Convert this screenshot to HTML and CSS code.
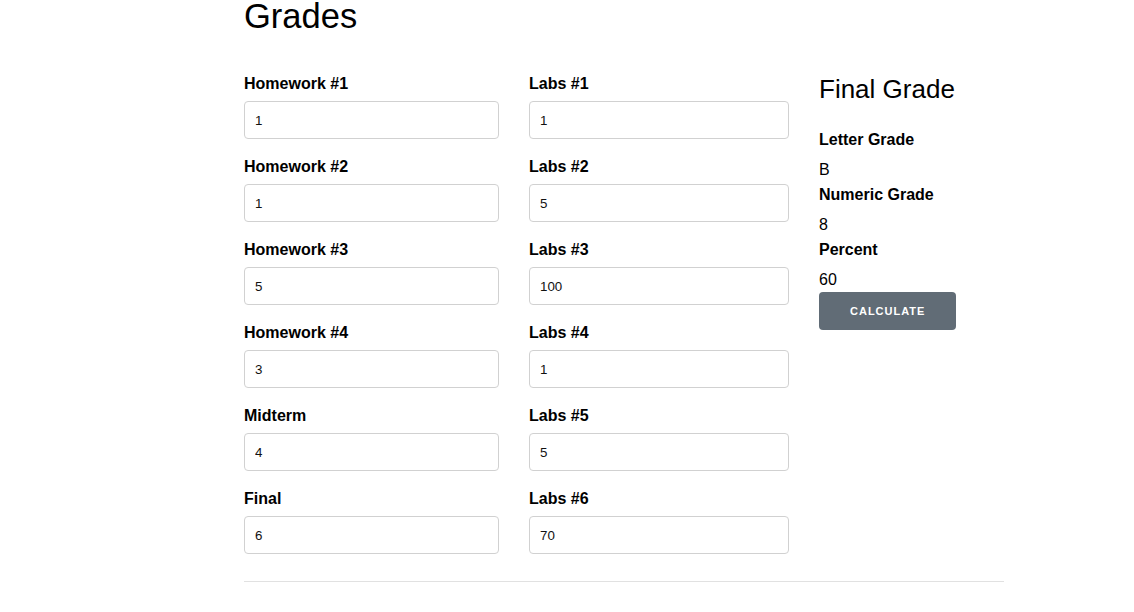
FILE: index.html
```html
<!DOCTYPE html>
<html>
<head>
<meta charset="utf-8">
<title>Grades</title>
<link rel="stylesheet" href="styles.css">
</head>
<body>
<div class="container">
  <h1 class="title">Grades</h1>
  <div class="grid">
    <div class="col">
      <div class="field"><label class="label">Homework #1</label><input class="input" type="text" value="1"></div>
      <div class="field"><label class="label">Homework #2</label><input class="input" type="text" value="1"></div>
      <div class="field"><label class="label">Homework #3</label><input class="input" type="text" value="5"></div>
      <div class="field"><label class="label">Homework #4</label><input class="input" type="text" value="3"></div>
      <div class="field"><label class="label">Midterm</label><input class="input" type="text" value="4"></div>
      <div class="field"><label class="label">Final</label><input class="input" type="text" value="6"></div>
    </div>
    <div class="col">
      <div class="field"><label class="label">Labs #1</label><input class="input" type="text" value="1"></div>
      <div class="field"><label class="label">Labs #2</label><input class="input" type="text" value="5"></div>
      <div class="field"><label class="label">Labs #3</label><input class="input" type="text" value="100"></div>
      <div class="field"><label class="label">Labs #4</label><input class="input" type="text" value="1"></div>
      <div class="field"><label class="label">Labs #5</label><input class="input" type="text" value="5"></div>
      <div class="field"><label class="label">Labs #6</label><input class="input" type="text" value="70"></div>
    </div>
    <div class="result">
      <h2 class="subtitle">Final Grade</h2>
      <div class="label result-label">Letter Grade</div>
      <div class="value">B</div>
      <div class="label result-label">Numeric Grade</div>
      <div class="value">8</div>
      <div class="label result-label">Percent</div>
      <div class="value value-last">60</div>
      <button class="button" type="button">Calculate</button>
    </div>
  </div>
  <hr class="rule">
</div>
</body>
</html>
```
FILE: styles.css
```css
html, body {
  margin: 0;
  padding: 0;
  background: #fff;
}
body {
  font-family: "Liberation Sans", Arial, Helvetica, sans-serif;
  color: #000;
}
.container {
  width: 760px;
  margin-left: 244px;
}
.title {
  margin: 0;
  padding-top: 1px;
  font-size: 34.5px;
  font-weight: 400;
  line-height: 30px;
}
.grid {
  display: grid;
  grid-template-columns: 255px 260px 1fr;
  column-gap: 30px;
  margin-top: 43px;
}
.col {
  display: flex;
  flex-direction: column;
}
.field {
  display: flex;
  flex-direction: column;
  margin-bottom: 18px;
}
.label {
  display: block;
  font-size: 16px;
  font-weight: 700;
  line-height: 20px;
  margin-bottom: 7px;
}
.input {
  box-sizing: border-box;
  width: 100%;
  height: 38px;
  padding: 6px 10px;
  border: 1px solid #d1d1d1;
  border-radius: 4px;
  background: #fff;
  font-family: "Liberation Sans", Arial, sans-serif;
  font-size: 13.333px;
  color: #111;
  outline: none;
}
.result {
  display: flex;
  flex-direction: column;
  align-items: flex-start;
}
.subtitle {
  margin: 0 0 26px 0;
  font-size: 26px;
  font-weight: 400;
  line-height: 30px;
}
.result-label {
  margin-bottom: 8px;
}
.value {
  font-size: 16px;
  line-height: 24px;
  margin-bottom: 3px;
}
.value-last {
  margin-bottom: 0;
}
.button {
  height: 38px;
  padding: 0 31px;
  border: none;
  border-radius: 4px;
  background: #616c76;
  color: #fff;
  font-family: "Liberation Sans", Arial, sans-serif;
  font-size: 11px;
  font-weight: 700;
  letter-spacing: 1px;
  text-transform: uppercase;
  line-height: 38px;
  cursor: pointer;
}
.rule {
  margin: 9px 0 0 0;
  border: 0;
  border-top: 1px solid #e1e1e1;
  height: 0;
}
```
